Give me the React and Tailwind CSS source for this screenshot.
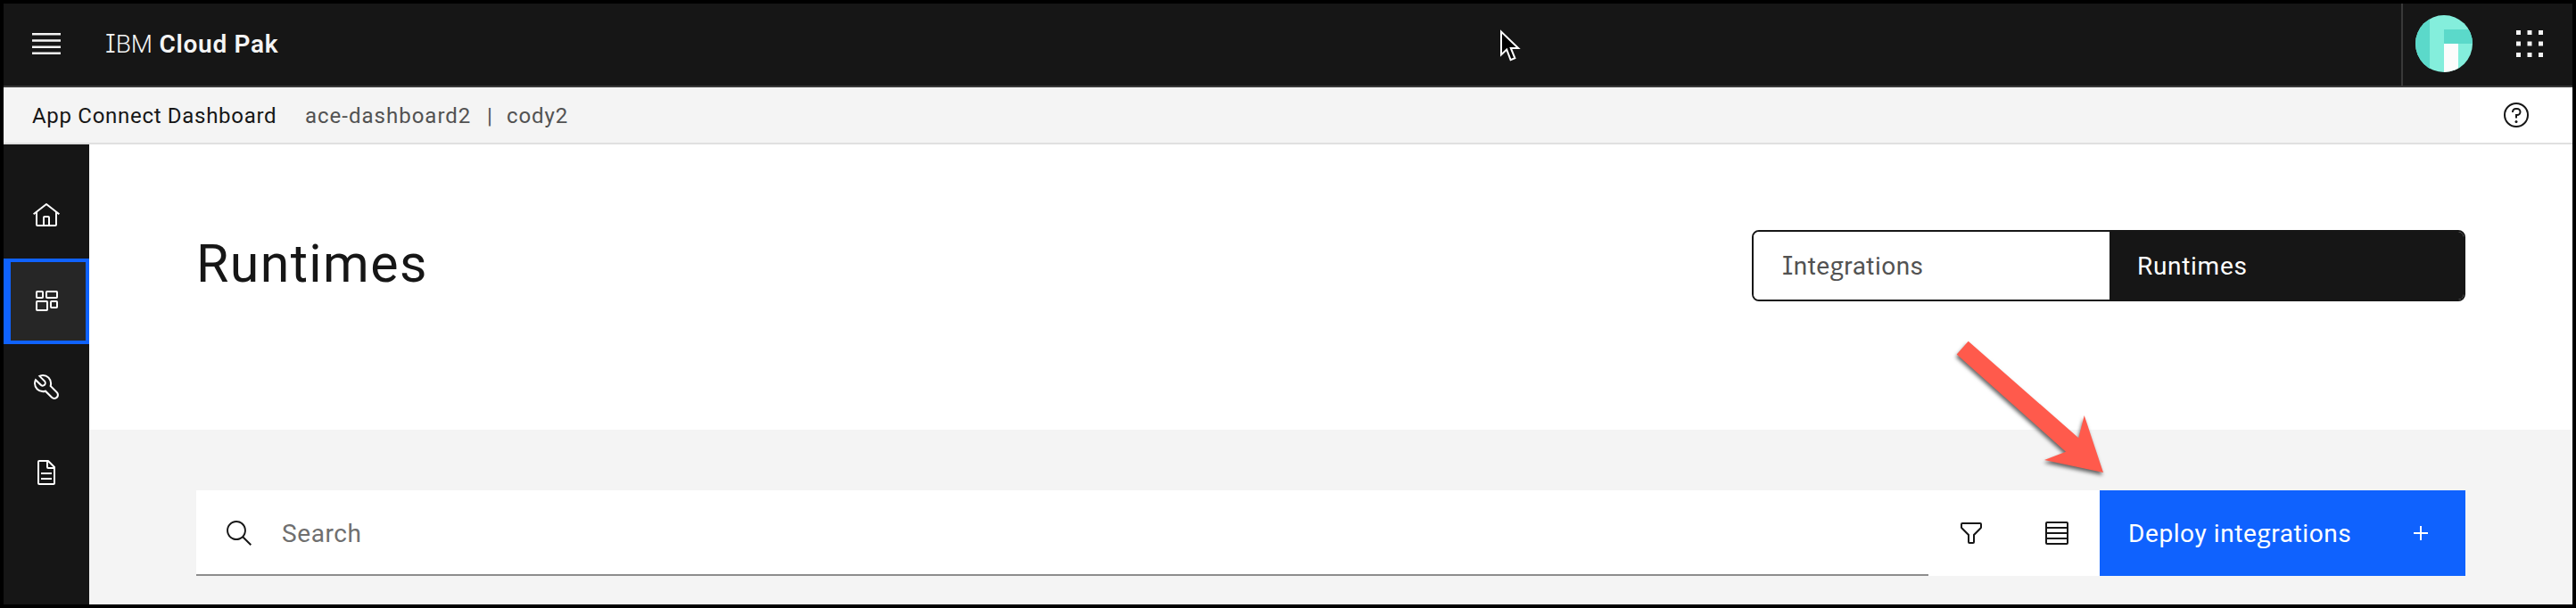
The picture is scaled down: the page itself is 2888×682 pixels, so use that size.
import React from "react";

const SlabI = () => <span className="font-['Inter'] leading-none [font-feature-settings:'cv08']">I</span>;
const G = () => <span className="font-['Open_Sans'] leading-none">g</span>;

function Icon({ children, className = "size-8", ...rest }) {
  return (
    <svg viewBox="0 0 32 32" fill="currentColor" className={`block shrink-0 ${className}`} {...rest}>
      {children}
    </svg>
  );
}

const MenuIcon = () => (
  <Icon>
    <path d="M0 4h32v2.5H0zM0 11.2h32v2.5H0zM0 18.4h32v2.5H0zM0 25.5h32v2.5H0z" />
  </Icon>
);

const HomeIcon = () => (
  <Icon>
    <path d="M16.6123,2.2138a1.01,1.01,0,0,0-1.2427,0L1,13.4194l1.2427,1.5717L4,13.6208V26a2.0041,2.0041,0,0,0,2,2H26a2.0037,2.0037,0,0,0,2-2V13.63L29.7573,15,31,13.4282ZM18,26H14V18h4Zm2,0V18a2.0023,2.0023,0,0,0-2-2H14a2.002,2.002,0,0,0-2,2v8H6V12.0615l10-7.79,10,7.8005V26Z" />
  </Icon>
);

const DashboardIcon = () => (
  <Icon>
    <g fill="none" stroke="currentColor" strokeWidth="2">
      <rect x="5" y="5" width="7" height="7" rx="0.8" />
      <rect x="16" y="5" width="12" height="7" rx="0.8" />
      <rect x="5" y="16" width="12" height="10" rx="0.8" />
      <rect x="21" y="16" width="7" height="7" rx="0.8" />
    </g>
  </Icon>
);

const ToolsIcon = () => (
  <Icon>
    <path d="M12.1 2a9.8 9.8 0 0 0-5.4 1.6l6.4 6.4a2.1 2.1 0 0 1 .2 3 2.1 2.1 0 0 1-3-.2L3.7 6.4A9.84 9.84 0 0 0 2 12.1a10.14 10.14 0 0 0 10.1 10.1 10.9 10.9 0 0 0 2.6-.3l6.7 6.7a5 5 0 0 0 7.1-7.1l-6.7-6.7a10.9 10.9 0 0 0 .3-2.6A10 10 0 0 0 12.1 2zm8 10.1a7.61 7.61 0 0 1-.3 2.1l-.3 1.1.8.8 6.7 6.7a2.88 2.88 0 0 1 .9 2.1A2.72 2.72 0 0 1 27 27a2.9 2.9 0 0 1-4.2 0l-6.7-6.7-.8-.8-1.1.3a7.61 7.61 0 0 1-2.1.3 8.27 8.27 0 0 1-5.7-2.3A7.63 7.63 0 0 1 4 12.1a8.33 8.33 0 0 1 .3-2.2l4.4 4.4a4.14 4.14 0 0 0 5.9.2 4.14 4.14 0 0 0-.2-5.9L10 4.2a6.45 6.45 0 0 1 2-.3 8.27 8.27 0 0 1 5.7 2.3 8.49 8.49 0 0 1 2.4 5.9z" />
  </Icon>
);

const DocumentIcon = () => (
  <Icon>
    <path d="M25.7 9.3l-7-7A.9.9 0 0 0 18 2H8a2 2 0 0 0-2 2v24a2 2 0 0 0 2 2h16a2 2 0 0 0 2-2V10a.9.9 0 0 0-.3-.7zM18 4.4l5.6 5.6H18zM24 28H8V4h8v6a2 2 0 0 0 2 2h6z" />
    <rect x="10" y="22" width="12" height="2" />
    <rect x="10" y="16" width="12" height="2" />
  </Icon>
);

const SearchIcon = () => (
  <Icon viewBox="0 0 16 16">
    <path d="M15,14.3L10.7,10c1.9-2.3,1.6-5.8-0.7-7.7S4.2,0.7,2.3,3S0.7,8.8,3,10.7c2,1.7,5,1.7,7,0l4.3,4.3L15,14.3z M2,6.5C2,4,4,2,6.5,2S11,4,11,6.5S9,11,6.5,11S2,9,2,6.5z" />
  </Icon>
);

const FilterIcon = () => (
  <Icon>
    <path d="M18,28H14a2,2,0,0,1-2-2V18.41L4.59,11A2,2,0,0,1,4,9.59V6A2,2,0,0,1,6,4H26a2,2,0,0,1,2,2V9.59A2,2,0,0,1,27.41,11L20,18.41V26A2,2,0,0,1,18,28ZM6,6V9.59l8,8V26h4V17.59l8-8V6Z" />
  </Icon>
);

const RowsIcon = () => (
  <Icon>
    <rect x="4" y="4" width="24" height="24" rx="1" fill="none" stroke="currentColor" strokeWidth="2" />
    <path d="M4 10h24M4 16h24M4 22h24" stroke="currentColor" strokeWidth="2" />
  </Icon>
);

const AddIcon = () => (
  <Icon>
    <path d="M15 8h2v7h7v2h-7v7h-2v-7H8v-2h7z" />
  </Icon>
);

const HelpIcon = () => (
  <Icon>
    <circle cx="16" cy="16" r="13" fill="none" stroke="currentColor" strokeWidth="2" />
    <circle cx="16" cy="23.5" r="1.5" />
    <path d="M17 8h-1.5A4.49 4.49 0 0 0 11 12.5V13h2v-.5A2.5 2.5 0 0 1 15.5 10H17a2.5 2.5 0 0 1 0 5H15v4.5h2V17a4.5 4.5 0 0 0 0-9z" />
  </Icon>
);

const AppsIcon = () => (
  <Icon>
    {[3.5, 16, 28.5].map((y) =>
      [3.5, 16, 28.5].map((x) => <rect key={`${x}-${y}`} x={x - 2.5} y={y - 2.5} width="5" height="5" />)
    )}
  </Icon>
);

const Avatar = () => (
  <svg viewBox="0 0 64 64" className="size-16 shrink-0 rounded-full">
    <rect width="64" height="64" fill="#84eedc" />
    <rect width="16" height="64" fill="#5bd9ca" />
    <rect x="32" y="16" width="32" height="16" fill="#5bd9ca" />
    <rect x="32" y="32" width="16" height="32" fill="#fcfcfc" />
  </svg>
);

function Header() {
  return (
    <header className="flex h-[94px] items-center border-b-2 border-[#393939] bg-[#161616] pb-0.5 text-[#f4f4f4]">
      <button className="ml-8">
        <MenuIcon />
      </button>
      <div className="ml-[50px] flex-1 pt-0.5 text-[28px] leading-9 whitespace-pre">
        <span className="font-light tracking-[-0.1px]"><SlabI />BM </span>
        <span className="ml-px font-semibold tracking-[0.7px]">Cloud Pak</span>
      </div>
      <div className="-mb-0.5 flex h-[92px] w-[192px] items-center border-l-2 border-[#393939] pb-0.5">
        <div className="ml-[14px] flex-none">
          <Avatar />
        </div>
        <button className="ml-12">
          <AppsIcon />
        </button>
      </div>
    </header>
  );
}

function SubHeader() {
  return (
    <div className="flex h-16 border-b-2 border-[#e0e0e0] bg-[#f4f4f4] text-[24px] leading-[64px]">
      <span className="ml-8 w-[306px] tracking-[0.7px] text-[#161616]">App Connect Dashboard</span>
      <span className="w-[204px] tracking-[1px] text-[#525252]">ace-dashboard2</span>
      <span className="w-[22px] text-[#525252]">|</span>
      <span className="tracking-[0.9px] text-[#525252]">cody2</span>
      <div className="ml-auto flex w-[126px] items-center justify-center bg-white text-[#161616]">
        <HelpIcon />
      </div>
    </div>
  );
}

function SideNav() {
  return (
    <nav className="flex w-24 flex-none flex-col bg-[#161616] pt-8 text-white">
      <a className="flex h-24 items-center justify-center"><HomeIcon /></a>
      <a className="flex h-24 items-center justify-center border-4 border-l-8 border-[#0f62fe] bg-[#262626] pr-1"><DashboardIcon /></a>
      <a className="flex h-24 items-center justify-center"><ToolsIcon /></a>
      <a className="flex h-24 items-center justify-center"><DocumentIcon /></a>
    </nav>
  );
}

function Switcher() {
  return (
    <div className="mt-24 flex h-20 w-[800px] overflow-hidden rounded-lg border-2 border-[#161616] text-[28px] leading-[78px]">
      <div className="w-[399px] bg-white pl-[32px] tracking-[0.45px] text-[#525252]">
        <SlabI />nte<G />rations
      </div>
      <div className="flex-1 bg-[#161616] pl-[31px] tracking-[0.7px] text-white">Runtimes</div>
    </div>
  );
}

function Toolbar() {
  return (
    <div className="flex h-24 bg-white text-[#161616]">
      <div className="flex flex-1 items-center border-b-2 border-[#8d8d8d] pl-8">
        <div className="pt-0.5"><SearchIcon /></div>
        <span className="ml-8 pt-[3px] text-[28px] leading-none tracking-[0.6px] text-[#6f6f6f]">Search</span>
      </div>
      <div className="flex w-24 items-center justify-center"><FilterIcon /></div>
      <div className="flex w-24 items-center justify-center"><RowsIcon /></div>
      <button className="flex w-[410px] items-center justify-between bg-[#0f62fe] pr-[34px] pl-8 text-[28px] leading-[96px] text-white">
        <span className="pt-px tracking-[0.58px]">Deploy inte<G />rations</span>
        <AddIcon />
      </button>
    </div>
  );
}

export default function App() {
  return (
    <div className="relative flex h-[682px] w-[2888px] flex-col overflow-hidden border-4 border-black bg-[#f4f4f4] font-['Roboto',sans-serif]">
      <Header />
      <SubHeader />
      <div className="flex min-h-0 flex-1">
        <SideNav />
        <main className="flex-1">
          <section className="flex h-[320px] items-start justify-between bg-white pr-[120px] pl-[120px]">
            <h1 className="mt-[97px] text-[59px] leading-[74px] tracking-[1.4px] text-[#161616]">Runtimes</h1>
            <Switcher />
          </section>
          <section className="bg-[#f4f4f4] px-[120px] pt-[68px]">
            <Toolbar />
          </section>
        </main>
      </div>

      <svg viewBox="0 0 26 40" className="absolute top-[27px] left-[1676px] h-10 w-[26px]">
        <path d="M3 4.5V30.5L9.2 24.6L13.6 36.2L18.4 34.3L13.8 23H22.2Z" fill="#000" stroke="#fff" strokeWidth="2" />
      </svg>

      <svg viewBox="0 0 260 200" className="absolute top-[356px] left-[2146px] h-[200px] w-[260px] overflow-visible drop-shadow-[-1px_3px_2px_rgba(0,0,0,0.6)]">
        <path d="M56.7 22.7L180.3 131.3L186.7 106L208 170L142 156L166 146.7L43.7 37.5Z" fill="#ff5a4c" />
      </svg>
    </div>
  );
}
